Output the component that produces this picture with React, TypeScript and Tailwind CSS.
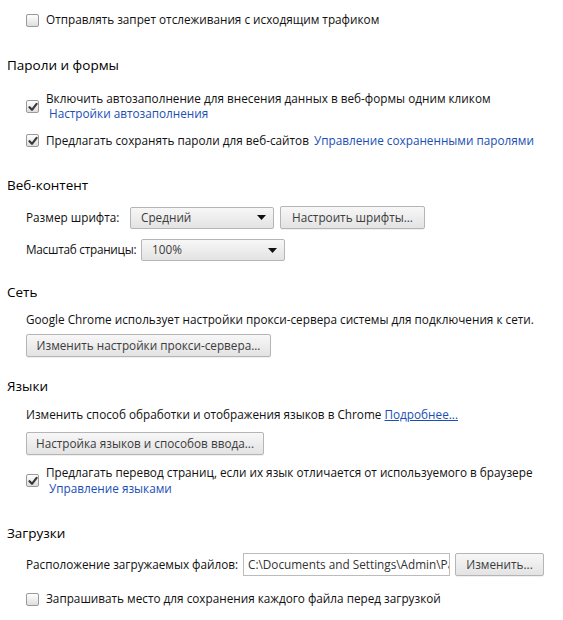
import React from "react";

const FONT = { fontFamily: '"Open Sans", "Noto Sans", sans-serif' };

function Check({ checked }: { checked?: boolean }) {
  return (
    <span className="relative inline-flex h-[13px] w-[13px] shrink-0 items-center justify-center rounded-[2px] border border-[#9a9a9a] bg-gradient-to-b from-[#ffffff] to-[#dedede]">
      {checked && (
        <svg width="10" height="10" viewBox="0 0 10 10" className="absolute left-[1px] top-[1px]">
          <path d="M1.5 5.2 L4 7.8 L8.6 1.8" fill="none" stroke="#3a3a3a" strokeWidth="2.2" strokeLinecap="round" strokeLinejoin="round" />
        </svg>
      )}
    </span>
  );
}

function Heading({ children, mt }: { children: React.ReactNode; mt: string }) {
  return <div className={`${mt} pl-[7px] text-[13.5px] leading-[20px] text-[#000]`}>{children}</div>;
}

function Btn({ children, w }: { children: React.ReactNode; w: string }) {
  return (
    <div className={`${w} flex h-[23px] shrink-0 items-center justify-center whitespace-nowrap rounded-[2px] border border-[#b5b5b5] bg-gradient-to-b from-[#f7f7f7] to-[#e3e3e3] text-[11.75px] text-[#3c3c3c] shadow-[0_1px_0_rgba(0,0,0,0.06)]`}>
      {children}
    </div>
  );
}

function Select({ value, w }: { value: string; w: string }) {
  return (
    <div className={`${w} flex h-[22px] shrink-0 items-center justify-between rounded-[2px] border border-[#b5b5b5] bg-gradient-to-b from-[#f7f7f7] to-[#e3e3e3] pl-[10px] pr-[7px] text-[11.75px] text-[#3c3c3c]`}>
      <span>{value}</span>
      <svg width="9" height="5" viewBox="0 0 9 5">
        <path d="M0 0 H9 L4.5 5 Z" fill="#111" />
      </svg>
    </div>
  );
}

export default function App() {
  return (
    <div className="h-[620px] w-[563px] overflow-hidden bg-white text-[11.75px] text-[#111]" style={FONT}>
      <div className="pt-[9px]">
        {/* Tracking */}
        <div className="flex h-[22px] items-center gap-[7px] pl-[26px]">
          <Check />
          <span>Отправлять запрет отслеживания с исходящим трафиком</span>
        </div>

        <Heading mt="mt-[24px]">Пароли и формы</Heading>

        <div className="mt-[16px] flex items-center gap-[7px] pl-[26px]">
          <Check checked />
          <div className="leading-[15px]">
            <div>Включить автозаполнение для внесения данных в веб-формы одним кликом</div>
            <div className="pl-[3px] text-[#1a4fb5]">Настройки автозаполнения</div>
          </div>
        </div>

        <div className="mt-[12px] flex items-center gap-[7px] pl-[26px] leading-[15px]">
          <Check checked />
          <span>
            Предлагать сохранять пароли для веб-сайтов{" "}
            <span className="ml-[2px] text-[#1a4fb5]">Управление сохраненными паролями</span>
          </span>
        </div>

        <Heading mt="mt-[27px]">Веб-контент</Heading>

        <div className="mt-[11px] flex items-center pl-[26px]">
          <span className="w-[104px] whitespace-nowrap">Размер шрифта:</span>
          <Select value="Средний" w="w-[144px]" />
          <div className="ml-[6px]">
            <Btn w="w-[145px]">Настроить шрифты...</Btn>
          </div>
        </div>

        <div className="mt-[10px] flex items-center pl-[26px]">
          <span className="w-[115px] shrink-0 whitespace-nowrap tracking-[-0.25px]">Масштаб страницы:</span>
          <Select value="100%" w="w-[144px]" />
        </div>

        <Heading mt="mt-[21px]">Сеть</Heading>

        <div className="mt-[10px] pl-[26px] leading-[15px]">
          Google Chrome использует настройки прокси-сервера системы для подключения к сети.
        </div>
        <div className="mt-[7px] pl-[26px]">
          <Btn w="w-[245px]">Изменить настройки прокси-сервера...</Btn>
        </div>

        <Heading mt="mt-[19px]">Языки</Heading>

        <div className="mt-[11px] pl-[26px] leading-[15px]">
          Изменить способ обработки и отображения языков в Chrome{" "}
          <span className="text-[#1a4fb5] underline">Подробнее...</span>
        </div>
        <div className="mt-[10px] pl-[26px]">
          <Btn w="w-[238px]">Настройка языков и способов ввода...</Btn>
        </div>

        <div className="mt-[9px] flex items-center gap-[7px] pl-[26px]">
          <Check checked />
          <div className="leading-[16px]">
            <div>Предлагать перевод страниц, если их язык отличается от используемого в браузере</div>
            <div className="pl-[3px] text-[#1a4fb5]">Управление языками</div>
          </div>
        </div>

        <Heading mt="mt-[27px]">Загрузки</Heading>

        <div className="mt-[10px] flex items-center pl-[26px]">
          <span className="w-[217px] shrink-0 whitespace-nowrap">Расположение загружаемых файлов:</span>
          <div className="flex h-[23px] w-[207px] shrink-0 items-center overflow-hidden whitespace-nowrap border border-[#bcbcbc] bg-white pl-[4px] text-[#333]">
            C:\Documents and Settings\Admin\Рабочий стол
          </div>
          <div className="ml-[5px]">
            <Btn w="w-[89px]">Изменить...</Btn>
          </div>
        </div>

        <div className="mt-[15px] flex h-[16px] items-center gap-[7px] pl-[26px]">
          <Check />
          <span>Запрашивать место для сохранения каждого файла перед загрузкой</span>
        </div>
      </div>
    </div>
  );
}
